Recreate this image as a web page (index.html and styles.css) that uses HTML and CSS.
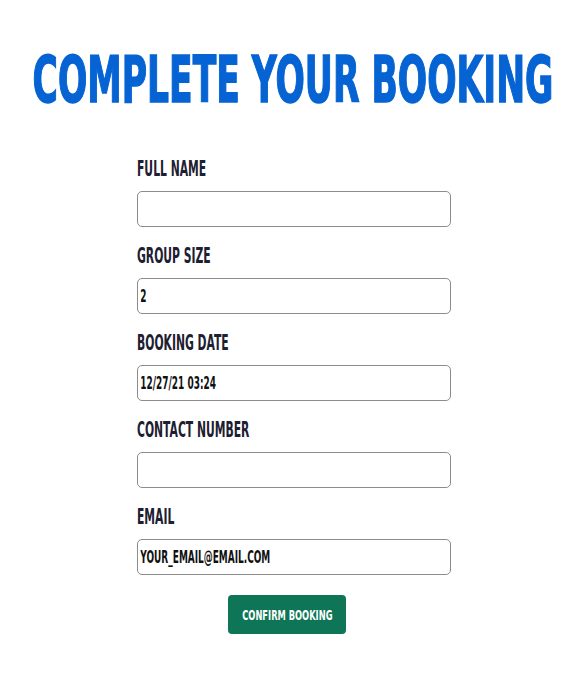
FILE: index.html
```html
<!DOCTYPE html>
<html>
<head>
<meta charset="utf-8">
<link rel="stylesheet" href="styles.css">
</head>
<body>
<main class="page">
  <h1 class="title"><span class="sq title-text">Complete Your Booking</span></h1>
  <form class="form">
    <div class="field">
      <label class="label"><span class="sq">Full Name</span></label>
      <div class="box"><input class="input" type="text" value=""></div>
    </div>
    <div class="field">
      <label class="label"><span class="sq">Group Size</span></label>
      <div class="box"><input class="input" type="text" value="2"></div>
    </div>
    <div class="field">
      <label class="label"><span class="sq">Booking Date</span></label>
      <div class="box"><input class="input" type="text" value="12/27/21 03:24"></div>
    </div>
    <div class="field">
      <label class="label"><span class="sq">Contact Number</span></label>
      <div class="box"><input class="input" type="text" value=""></div>
    </div>
    <div class="field">
      <label class="label"><span class="sq">Email</span></label>
      <div class="box"><input class="input" type="text" value="YOUR_EMAIL@EMAIL.COM"></div>
    </div>
    <div class="actions">
      <button class="button" type="button"><span class="sq">Confirm Booking</span></button>
    </div>
  </form>
</main>
</body>
</html>
```
FILE: styles.css
```css
html, body {
  margin: 0;
  padding: 0;
  background: #ffffff;
}
body {
  font-family: "DejaVu Sans Condensed", "DejaVu Sans", sans-serif;
  font-stretch: condensed;
  font-weight: 700;
}
.page {
  display: flex;
  flex-direction: column;
  align-items: center;
  padding-top: 40px;
}
.sq {
  display: inline-block;
  flex: none;
  text-transform: uppercase;
  transform: scaleX(0.545);
  transform-origin: left center;
  white-space: nowrap;
}
.title {
  margin: 0;
  font-size: 64px;
  line-height: 80px;
  color: #0563d3;
  width: 586px;
  display: flex;
  justify-content: center;
}
.title-text {
  transform: scaleX(0.6);
  transform-origin: center center;
  -webkit-text-stroke: 1.5px #0563d3;
}
.form {
  width: 314px;
  margin-top: 34px;
  margin-left: 2px;
  display: flex;
  flex-direction: column;
}
.field {
  display: flex;
  flex-direction: column;
  margin-bottom: 14px;
}
.label {
  font-size: 22px;
  line-height: 30px;
  color: #1d2030;
  height: 30px;
  margin-bottom: 7px;
}
.box {
  height: 34px;
  border: 1px solid #8c8c8c;
  border-radius: 5px;
  overflow: hidden;
  display: flex;
}
.input {
  border: none;
  outline: none;
  background: transparent;
  height: 34px;
  width: calc(100% / 0.586);
  flex: none;
  padding: 0 0 0 4px;
  margin: 0;
  font-family: inherit;
  font-stretch: condensed;
  font-weight: 700;
  font-size: 17px;
  color: #111111;
  transform: scaleX(0.586);
  transform-origin: left center;
}
.actions {
  display: flex;
  justify-content: center;
  margin-top: 6px;
  padding-right: 14px;
}
.button {
  width: 118px;
  height: 39px;
  border: none;
  border-radius: 4px;
  background: #0e7556;
  color: #ffffff;
  font-family: inherit;
  font-weight: 700;
  font-size: 14px;
  padding: 0;
  overflow: hidden;
  display: flex;
  justify-content: center;
  align-items: center;
}
.button .sq {
  transform: scaleX(0.66);
  transform-origin: center center;
}
```
